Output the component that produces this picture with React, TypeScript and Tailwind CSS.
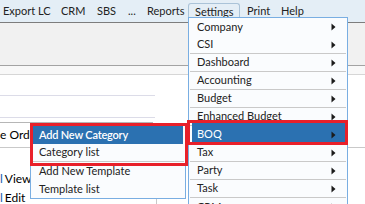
import React from "react";

const Arrow = () => (
  <svg width="5" height="8" viewBox="0 0 5 8" className="shrink-0">
    <path d="M0.5 0.5 L4.5 4 L0.5 7.5 Z" fill="#1b1b1b" />
  </svg>
);

type Item = { label: string; sep: boolean; active?: boolean };

const items: Item[] = [
  { label: "Company", sep: false },
  { label: "CSI", sep: true },
  { label: "Dashboard", sep: true },
  { label: "Accounting", sep: true },
  { label: "Budget", sep: true },
  { label: "Enhanced Budget", sep: true },
  { label: "BOQ", sep: true, active: true },
  { label: "Tax", sep: true },
  { label: "Party", sep: true },
  { label: "Task", sep: true },
  { label: "CRM", sep: false },
];

export default function App() {
  return (
    <div
      className="relative w-[365px] h-[204px] overflow-hidden bg-white text-[11px] text-[#222222]"
      style={{ fontFamily: "Lato, 'Noto Sans', sans-serif" }}
    >
      {/* menubar */}
      <div className="flex h-[23px] items-start border-b border-[#7d7d7d] bg-[#e4eef6] pl-[3px]">
        <span className="w-[58px] leading-[22px]">Export LC</span>
        <span className="w-[36px] leading-[22px]">CRM</span>
        <span className="w-[31px] leading-[22px]">SBS</span>
        <span className="w-[19px] leading-[22px]">...</span>
        <span className="w-[41px] leading-[22px]">Reports</span>
        <span className="mt-[3px] h-[19px] w-[52px] rounded-t-[3px] border border-b-0 border-[#aac3d8] pl-[6px] leading-[16px]">
          Settings
        </span>
        <span className="ml-[7px] w-[34px] leading-[22px]">Print</span>
        <span className="leading-[22px]">Help</span>
      </div>

      {/* page content */}
      <div className="h-[43px] border-b border-[#a3a3a3] bg-[#f1f1f1]" />
      <div className="h-[9px] border-b border-[#d6d6d6] bg-[#f8f8f8]" />
      <div className="h-[20px]" />
      <div className="h-px w-[155px] bg-[#dcdce8]" />
      <div className="h-[21px]" />
      <div className="h-px w-[155px] bg-[#dcdce8]" />
      <div className="h-[4px]" />
      <div className="h-px w-[153px] bg-[#b6b6b6]" />
      <div className="flex h-[24px] items-center text-[12px] text-black">e Order</div>
      <div className="h-px bg-[#c9c9c9]" />
      <div className="h-[21px]" />
      <div className="flex h-[19px] items-center text-[12px] text-black">
        <span className="text-[#2060b0]">l</span>
        <span className="ml-[2px]">View</span>
      </div>
      <div className="flex h-[19px] items-center text-[12px] text-black">
        <div className="flex h-full w-[157px] items-center border-r border-[#c9c9c9]">
          <span className="text-[#2060b0]">l</span>
          <span className="ml-[2px]">Edit</span>
        </div>
      </div>

      {/* settings dropdown */}
      <div className="absolute left-[188px] top-[17px] w-[160px] border border-[#79aee2] bg-[#fafcfe]">
        {items.map((it) => (
          <div
            key={it.label}
            className={
              "relative mx-[1px] h-[18px] " +
              (it.sep ? "border-b border-[#c9c9c9]" : "")
            }
          >
            {it.active && (
              <div className="absolute left-[2px] right-[1px] top-[-3px] bottom-0 bg-[#2b71b1]" />
            )}
            <div
              className={
                "relative flex h-full items-center justify-between pl-[7px] pr-[10px] " +
                (it.active ? "text-white" : "")
              }
            >
              <span>{it.label}</span>
              <Arrow />
            </div>
          </div>
        ))}
      </div>

      {/* BOQ submenu */}
      <div className="absolute left-[30px] top-[125px] w-[156px] border border-[#79aee2] bg-[#fafcfe]">
        <div className="h-[18px] px-[2px]">
          <div className="flex h-full items-center bg-[#2b71b1] pl-[6px] font-semibold tracking-[-0.2px] text-white">
            Add New Category
          </div>
        </div>
        <div className="mx-[1px] flex h-[18px] items-center border-b border-[#c9c9c9] pl-[7px]">
          Category list
        </div>
        <div className="flex h-[18px] items-center pl-[8px]">Add New Template</div>
        <div className="flex h-[18px] items-center pl-[8px]">Template list</div>
      </div>

      {/* red highlight boxes */}
      <div className="pointer-events-none absolute left-[30px] top-[123px] h-[43px] w-[158px] border-[3px] border-[#e8202a]" />
      <div className="pointer-events-none absolute left-[187px] top-[120px] h-[25px] w-[161px] border-[3px] border-[#e8202a]" />
    </div>
  );
}
